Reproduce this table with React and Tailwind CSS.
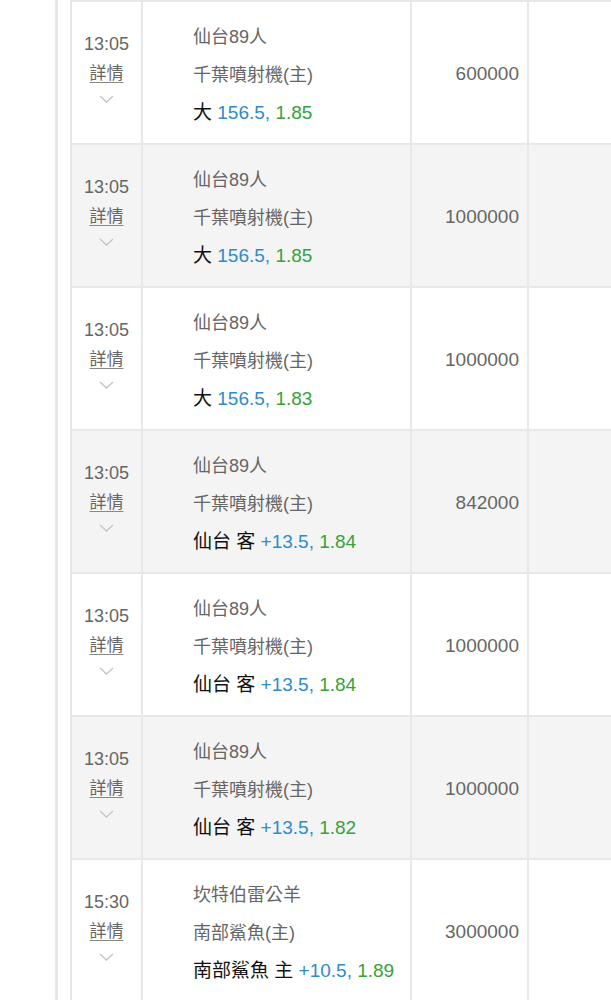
import React from "react";

const rows = [
  { time: "13:05", t1: "仙台89人", t2: "千葉噴射機(主)", pick: "大", h: "156.5,", o: "1.85", amt: "600000", bg: "bg-white" },
  { time: "13:05", t1: "仙台89人", t2: "千葉噴射機(主)", pick: "大", h: "156.5,", o: "1.85", amt: "1000000", bg: "bg-[#f4f4f4]" },
  { time: "13:05", t1: "仙台89人", t2: "千葉噴射機(主)", pick: "大", h: "156.5,", o: "1.83", amt: "1000000", bg: "bg-white" },
  { time: "13:05", t1: "仙台89人", t2: "千葉噴射機(主)", pick: "仙台 客", h: "+13.5,", o: "1.84", amt: "842000", bg: "bg-[#f4f4f4]" },
  { time: "13:05", t1: "仙台89人", t2: "千葉噴射機(主)", pick: "仙台 客", h: "+13.5,", o: "1.84", amt: "1000000", bg: "bg-white" },
  { time: "13:05", t1: "仙台89人", t2: "千葉噴射機(主)", pick: "仙台 客", h: "+13.5,", o: "1.82", amt: "1000000", bg: "bg-[#f4f4f4]" },
  { time: "15:30", t1: "坎特伯雷公羊", t2: "南部鯊魚(主)", pick: "南部鯊魚 主", h: "+10.5,", o: "1.89", amt: "3000000", bg: "bg-white" },
];

function Chevron() {
  return (
    <svg width="15" height="8" viewBox="0 0 15 8" fill="none">
      <path d="M1 1 L7.5 7 L14 1" stroke="#c4c4c4" strokeWidth="1.3" />
    </svg>
  );
}

export default function App() {
  return (
    <div
      className="w-[611px] h-[1000px] overflow-hidden bg-white flex"
      style={{ fontFamily: '"Liberation Sans", "Noto Sans CJK TC", sans-serif' }}
    >
      <div className="w-[55px] shrink-0" />
      <div className="w-[3px] shrink-0 bg-[#e8e8e8]" />
      <div className="w-[12px] shrink-0" />
      <div className="shrink-0 w-[700px] border-l-2 border-t-2 border-[#e8e8e8] self-start">
        {rows.map((r, i) => (
          <div key={i} className={`flex h-[143px] border-b-2 border-[#e8e8e8] ${r.bg}`}>
            <div className="w-[71px] shrink-0 border-r-2 border-[#e8e8e8] flex flex-col items-center pt-[27px] text-[#666]">
              <div className="text-[18px] leading-[30px]">{r.time}</div>
              <div className="text-[17px] leading-[30px] underline underline-offset-[3px] decoration-[#888]">詳情</div>
              <div className="mt-[6px]">
                <Chevron />
              </div>
            </div>
            <div className="w-[269px] shrink-0 border-r-2 border-[#e8e8e8] pl-[50px] pt-[16px]">
              <div className="text-[18px] leading-[38px] text-[#666]">{r.t1}</div>
              <div className="text-[18px] leading-[38px] text-[#666]">{r.t2}</div>
              <div className="text-[19px] leading-[38px] whitespace-nowrap">
                <span className="text-[#111]">{r.pick} </span>
                <span className="text-[#2f8bcb]">{r.h}</span>
                <span className="text-[#35a23a]"> {r.o}</span>
              </div>
            </div>
            <div className="w-[117px] shrink-0 border-r-2 border-[#e8e8e8] flex items-center justify-end pr-[8px] pt-[3px]">
              <span className="text-[19px] text-[#666]">{r.amt}</span>
            </div>
            <div className="flex-1" />
          </div>
        ))}
      </div>
    </div>
  );
}
